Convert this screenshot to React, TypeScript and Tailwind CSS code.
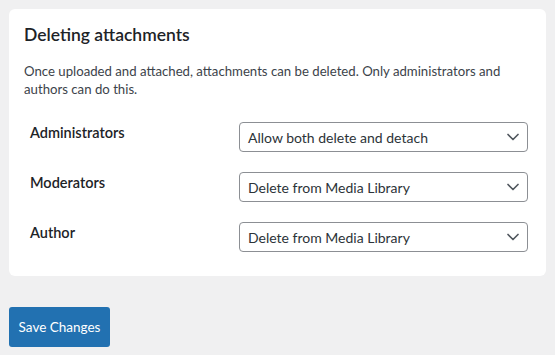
import { ChevronDown } from "lucide-react";

const rows = [
  { label: "Administrators", value: "Allow both delete and detach" },
  { label: "Moderators", value: "Delete from Media Library" },
  { label: "Author", value: "Delete from Media Library" },
];

function Select({ value }: { value: string }) {
  return (
    <div className="flex h-[30px] w-[289px] items-center justify-between rounded-[4px] border border-[#8c8f94] bg-white pl-[8px] pr-[4px] text-[14px] text-[#2c3338]">
      <span>{value}</span>
      <ChevronDown className="h-[20px] w-[20px] text-[#50575e]" strokeWidth={2} />
    </div>
  );
}

export default function App() {
  return (
    <div className="min-h-screen bg-[#f0f0f1] p-[9px] font-['Lato',sans-serif] text-[#1d2327]">
      {/* settings card */}
      <div className="rounded-[6px] bg-white pb-[24px] pl-[15px] pr-[18px] pt-[14px]">
        <h2 className="text-[17.5px] font-semibold leading-[24px]">Deleting attachments</h2>
        <p className="mt-[15px] text-[13.2px] leading-[18px] text-[#3c434a]">
          Once uploaded and attached, attachments can be deleted. Only administrators and
          authors can do this.
        </p>

        <div className="mt-[24px] flex flex-col gap-[20px] pl-[6px]">
          {rows.map((r) => (
            <div key={r.label} className="flex h-[30px] items-start justify-between">
              <span className="pt-[1px] text-[14.5px] font-semibold leading-[20px]">{r.label}</span>
              <Select value={r.value} />
            </div>
          ))}
        </div>
      </div>

      <button
        type="button"
        className="mt-[31px] h-[40px] w-[101px] rounded-[3px] bg-[#2271b1] text-[13.5px] text-white"
      >
        Save Changes
      </button>
    </div>
  );
}
